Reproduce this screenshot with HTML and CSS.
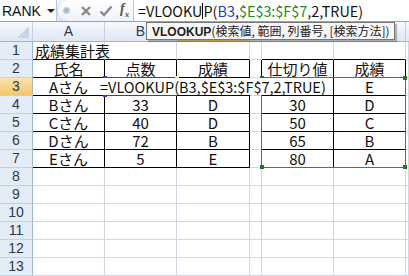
FILE: index.html
```html
<!DOCTYPE html>
<html lang="ja">

<head>
    <meta charset="UTF-8" />
    <title>成績集計表</title>
    <link rel="stylesheet" href="styles.css">
</head>

<body>
    <div class="formula-bar">
        <div class="name-box">
            <span class="name">RANK</span>
            <span class="arrow"></span>
        </div>
        <div class="buttons">
            <span class="grip"></span>
            <svg class="icon" width="12" height="12" viewBox="0 0 12 12">
                <path d="M2 2 L10 10 M10 2 L2 10" stroke="#8a8a8a" stroke-width="2.4" />
            </svg>
            <svg class="icon" width="14" height="12" viewBox="0 0 14 12">
                <path d="M1.5 6.5 L5 10 L12.5 1.5" stroke="#8a8a8a" stroke-width="2.4" fill="none" />
            </svg>
            <span class="fx">f<sub>x</sub></span>
        </div>
        <div class="formula-input">
            <span>=VLOOKU</span><span class="caret"></span><span>P(</span><span class="ref-blue">B3</span><span>,</span><span class="ref-green">$E$3:$F$7</span><span>,2,TRUE)</span>
        </div>
    </div>

    <div class="sheet">
        <div class="grid">
            <!-- column headers -->
            <div class="corner"><span class="tri"></span></div>
            <div class="col-head">A</div>
            <div class="col-head">B</div>
            <div class="col-head active">C</div>
            <div class="col-head">D</div>
            <div class="col-head">E</div>
            <div class="col-head">F</div>
            <div class="col-head last"></div>

            <!-- row 1 -->
            <div class="row-head">1</div>
            <div class="cell left bb">成績集計表</div>
            <div class="cell bb"></div>
            <div class="cell bb"></div>
            <div class="cell"></div>
            <div class="cell bb"></div>
            <div class="cell bb"></div>
            <div class="cell"></div>

            <!-- row 2 -->
            <div class="row-head">2</div>
            <div class="cell br bb">氏名</div>
            <div class="cell br bb">点数</div>
            <div class="cell br bb">成績</div>
            <div class="cell br"></div>
            <div class="cell br bb">仕切り値</div>
            <div class="cell br bb">成績</div>
            <div class="cell"></div>

            <!-- row 3 -->
            <div class="row-head active">3</div>
            <div class="cell br bb">Aさん</div>
            <div class="cell br bb"></div>
            <div class="cell br bb"></div>
            <div class="cell br"></div>
            <div class="cell br bb"></div>
            <div class="cell br bb">E</div>
            <div class="cell"></div>

            <!-- row 4 -->
            <div class="row-head">4</div>
            <div class="cell br bb">Bさん</div>
            <div class="cell br bb">33</div>
            <div class="cell br bb">D</div>
            <div class="cell br"></div>
            <div class="cell br bb">30</div>
            <div class="cell br bb">D</div>
            <div class="cell"></div>

            <!-- row 5 -->
            <div class="row-head">5</div>
            <div class="cell br bb">Cさん</div>
            <div class="cell br bb">40</div>
            <div class="cell br bb">D</div>
            <div class="cell br"></div>
            <div class="cell br bb">50</div>
            <div class="cell br bb">C</div>
            <div class="cell"></div>

            <!-- row 6 -->
            <div class="row-head">6</div>
            <div class="cell br bb">Dさん</div>
            <div class="cell br bb">72</div>
            <div class="cell br bb">B</div>
            <div class="cell br"></div>
            <div class="cell br bb">65</div>
            <div class="cell br bb">B</div>
            <div class="cell"></div>

            <!-- row 7 -->
            <div class="row-head">7</div>
            <div class="cell br bb">Eさん</div>
            <div class="cell br bb">5</div>
            <div class="cell br bb">E</div>
            <div class="cell br"></div>
            <div class="cell br bb">80</div>
            <div class="cell br bb">A</div>
            <div class="cell"></div>

            <!-- empty rows -->
            <div class="row-head">8</div>
            <div class="cell"></div><div class="cell"></div><div class="cell"></div><div class="cell"></div><div class="cell"></div><div class="cell"></div><div class="cell"></div>
            <div class="row-head">9</div>
            <div class="cell"></div><div class="cell"></div><div class="cell"></div><div class="cell"></div><div class="cell"></div><div class="cell"></div><div class="cell"></div>
            <div class="row-head">10</div>
            <div class="cell"></div><div class="cell"></div><div class="cell"></div><div class="cell"></div><div class="cell"></div><div class="cell"></div><div class="cell"></div>
            <div class="row-head">11</div>
            <div class="cell"></div><div class="cell"></div><div class="cell"></div><div class="cell"></div><div class="cell"></div><div class="cell"></div><div class="cell"></div>
            <div class="row-head">12</div>
            <div class="cell"></div><div class="cell"></div><div class="cell"></div><div class="cell"></div><div class="cell"></div><div class="cell"></div><div class="cell"></div>
            <div class="row-head">13</div>
            <div class="cell"></div><div class="cell"></div><div class="cell"></div><div class="cell"></div><div class="cell"></div><div class="cell"></div><div class="cell"></div>
        </div>

        <!-- reference highlights -->
        <div class="ref-box blue-box">
            <span class="handle tl"></span><span class="handle bl"></span><span class="handle tr"></span>
        </div>
        <div class="ref-box green-box">
            <span class="handle tl"></span><span class="handle tr"></span>
            <span class="handle bl"></span><span class="handle br"></span>
        </div>

        <!-- cell being edited -->
        <div class="edit-box">=VLOOKUP(B3,$E$3:$F$7,2,TRUE)</div>
    </div>

    <div class="tooltip"><b>VLOOKUP</b>(検索値, 範囲, 列番号, [検索方法])</div>
</body>

</html>
```

FILE: styles.css
```css
body {
    margin: 0;
    width: 409px;
    height: 276px;
    overflow: hidden;
    background-color: #ffffff;
    font-family: "Noto Sans CJK JP", sans-serif;
    position: relative;
}

/* formula bar */
.formula-bar {
    display: flex;
    height: 21px;
    border-bottom: 1px solid #8ea4c1;
    background: linear-gradient(#f3f6fb, #dde6f2);
}

.name-box {
    width: 57px;
    display: flex;
    align-items: center;
    padding: 0 0 0 2px;
    box-sizing: border-box;
    background-color: #ffffff;
    border-right: 1px solid #b9c9dd;
}

.name {
    font-family: "Liberation Sans", sans-serif;
    font-size: 14px;
    color: #111;
}

.arrow {
    margin-left: 6px;
    border-left: 4px solid transparent;
    border-right: 4px solid transparent;
    border-top: 4px solid #222;
}

.buttons {
    width: 76px;
    display: flex;
    align-items: center;
    padding-left: 2px;
    box-sizing: border-box;
    background: linear-gradient(#ffffff, #eef2f8);
    border-radius: 10px 0 0 10px;
    border-left: 1px solid #c5d3e4;
}

.grip {
    width: 7px;
    height: 7px;
    border-radius: 50%;
    background: radial-gradient(#9fb0c4, #d6dee9);
    margin: 0 10px 0 3px;
}

.icon {
    display: block;
    margin-right: 7px;
}

.fx {
    font-family: "Liberation Serif", serif;
    font-style: italic;
    font-weight: bold;
    font-size: 14px;
    color: #555;
    line-height: 1;
}

.fx sub {
    font-size: 9px;
}

.formula-input {
    flex: 1;
    display: flex;
    align-items: center;
    padding-left: 4px;
    background-color: #ffffff;
    border-left: 1px solid #b9c9dd;
    font-size: 14.4px;
    line-height: 20px;
    color: #111;
    white-space: pre;
}

.caret {
    width: 1px;
    height: 16px;
    background-color: #000;
}

.ref-blue {
    color: #1f3fbf;
}

.ref-green {
    color: #1e8a1e;
}

/* sheet grid */
.sheet {
    position: relative;
}

.grid {
    display: grid;
    grid-template-columns: 33px 72px 72px 73px 12px 72px 72px 3px;
    grid-template-rows: 20px repeat(13, 18px);
}

.grid > div {
    box-sizing: border-box;
}

.corner,
.col-head {
    background: linear-gradient(#f7f9fc, #dfe7f2);
    border-right: 1px solid #c3d1e2;
    border-bottom: 1px solid #9eb6ce;
}

.corner {
    position: relative;
}

.tri {
    position: absolute;
    right: 3px;
    bottom: 3px;
    border-left: 12px solid transparent;
    border-bottom: 12px solid #c9d5e4;
}

.col-head {
    font-family: "Liberation Sans", sans-serif;
    font-size: 14px;
    color: #2a3a4f;
    text-align: center;
    line-height: 19px;
}

.col-head.active {
    background: linear-gradient(#fbe3ae, #f2c66d);
    border-bottom-color: #e2a84a;
}

.col-head.last {
    border-right: none;
}

.row-head {
    background-color: #e4ecf7;
    border-right: 1px solid #9eb6ce;
    border-bottom: 1px solid #c3d1e2;
    font-family: "Liberation Sans", sans-serif;
    font-size: 14px;
    color: #2a3a4f;
    text-align: center;
    line-height: 17px;
}

.row-head.active {
    background: linear-gradient(#fbe3ae, #f2c66d);
}

.cell {
    border-right: 1px solid #d0d7e5;
    border-bottom: 1px solid #d0d7e5;
    font-size: 15px;
    line-height: 17px;
    color: #111;
    text-align: center;
    white-space: nowrap;
}

.cell.left {
    text-align: left;
    padding-left: 2px;
}

.cell.br {
    border-right-color: #000;
}

.cell.bb {
    border-bottom-color: #000;
}

/* range markers */
.ref-box {
    position: absolute;
    box-sizing: border-box;
}

.blue-box {
    left: 104px;
    top: 55px;
    width: 74px;
    height: 19px;
    border: 1px solid #2a3fd0;
}

.green-box {
    left: 261px;
    top: 55px;
    width: 145px;
    height: 91px;
    border: 1px solid #2e8b2e;
}

.handle {
    position: absolute;
    width: 4px;
    height: 4px;
}

.blue-box .handle {
    background-color: #2a3fd0;
}

.blue-box .handle.tr {
    background-color: #f3e9a0;
}

.green-box .handle {
    background-color: #1d7a1d;
}

.handle.tl { left: -2px; top: -2px; }
.handle.tr { right: -2px; top: -2px; }
.handle.bl { left: -2px; bottom: -2px; }
.handle.br { right: -2px; bottom: -2px; }

.edit-box {
    position: absolute;
    left: 99px;
    top: 56px;
    width: 228px;
    height: 17px;
    background-color: #ffffff;
    font-size: 14.5px;
    line-height: 17px;
    color: #111;
    padding-left: 1px;
    box-sizing: border-box;
    white-space: nowrap;
}

/* function tooltip */
.tooltip {
    position: absolute;
    left: 146px;
    top: 22px;
    height: 16px;
    padding: 0 4px 0 5px;
    background-color: #f7f7f7;
    border: 1px solid #767676;
    box-shadow: 2px 2px 1px rgba(0, 0, 0, 0.25);
    font-size: 12px;
    line-height: 16px;
    color: #222;
    white-space: nowrap;
}

.tooltip b {
    font-family: "Liberation Sans", sans-serif;
    font-size: 12px;
}
```
